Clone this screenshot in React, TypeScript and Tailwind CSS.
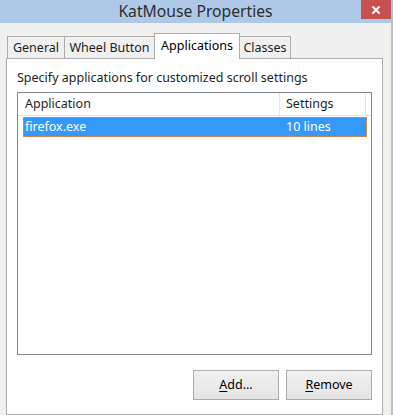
import { X } from 'lucide-react'

const font = { fontFamily: '"Noto Sans", "Open Sans", sans-serif' }

const tabs = [
  { label: 'General', w: 'w-[58px]' },
  { label: 'Wheel Button', w: 'w-[91px]' },
  { label: 'Applications', w: 'w-[86px]', active: true },
  { label: 'Classes', w: 'w-[52px]' },
]

function Tab({ label, w, active }: { label: string; w: string; active?: boolean }) {
  if (active) {
    return (
      <div
        className={`${w} -ml-px h-[26px] relative z-10 -mb-px bg-white border border-b-0 border-[#acacac] flex items-start justify-center pt-[3px] text-[12.5px] text-black`}
      >
        {label}
      </div>
    )
  }
  return (
    <div
      className={`${w} -ml-px h-[22px] bg-[#f0f0f0] border border-b-0 border-[#acacac] flex items-center justify-center pt-[1px] text-[12.5px] text-[#1e1e1e]`}
    >
      {label}
    </div>
  )
}

function Btn({ accel, rest }: { accel: string; rest: string }) {
  return (
    <button className="w-[86px] h-[30px] border border-[#acacac] bg-gradient-to-b from-[#f0f0f0] to-[#e5e5e5] text-[12.5px] text-black flex items-center justify-center">
      <span className="underline underline-offset-2">{accel}</span>
      {rest}
    </button>
  )
}

export default function App() {
  return (
    <div className="w-[393px] h-[415px] bg-[#f0f0f0] flex overflow-hidden" style={font}>
      <div className="flex-1 flex flex-col">
        {/* title bar */}
        <div className="h-[23px] bg-[#adc9e7] flex items-start relative shrink-0">
          <div className="flex-1 text-center text-[15.7px] leading-[23px] text-[#2e2e2e] pl-[30px]">
            KatMouse Properties
          </div>
          <div className="w-[30px] h-[19px] bg-[#c75050] flex items-center justify-center">
            <X size={12} strokeWidth={4} color="white" />
          </div>
        </div>

        {/* tabs */}
        <div className="flex items-end pl-[8px] mt-[10px] h-[25px] shrink-0">
          {tabs.map((t) => (
            <Tab key={t.label} {...t} />
          ))}
        </div>

        {/* panel */}
        <div className="ml-[6px] w-[377px] flex-1 bg-white border border-[#acacac] px-[10px] pt-[11px] flex flex-col">
          <p className="text-[12.5px] leading-[16px] text-[#1e1e1e]">
            Specify applications for customized scroll settings
          </p>

          <div className="mt-[6px] h-[263px] border border-[#828790] bg-white relative">
            {/* header */}
            <div className="h-[23px] flex text-[12.5px] text-[#1e1e1e] border-b border-[#e5e5e5]">
              <div className="w-[262px] border-r border-[#e5e5e5] pl-[7px] flex items-center">Application</div>
              <div className="w-[86px] border-r border-[#e5e5e5] pl-[6px] flex items-center">Settings</div>
            </div>
            {/* selected row */}
            <div className="ml-[5px] mt-[1px] w-[344px] h-[20px] bg-[#3399ff] border border-dotted border-[#d9955a] flex text-[12.5px] text-white">
              <div className="w-[256px] pl-[1px] flex items-center">firefox.exe</div>
              <div className="pl-[6px] flex items-center">10 lines</div>
            </div>
          </div>

          <div className="mt-[15px] flex justify-end gap-[7px]">
            <Btn accel="A" rest="dd..." />
            <Btn accel="R" rest="emove" />
          </div>
        </div>
      </div>
      <div className="w-[2px] bg-[#a9c4e0]" />
    </div>
  )
}
